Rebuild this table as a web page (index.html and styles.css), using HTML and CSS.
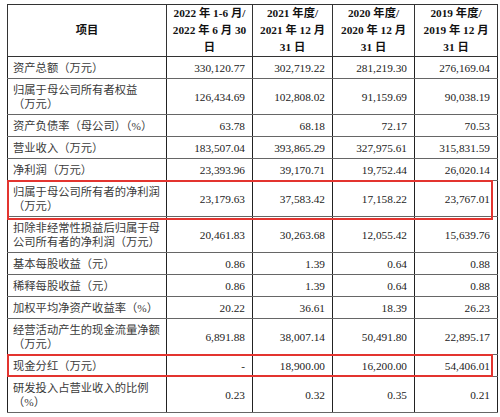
FILE: index.html
```html
<!DOCTYPE html>
<html>
<head>
    <title>主要财务数据</title>
    <link rel="stylesheet" href="styles.css">
</head>
<body>
    <div class="page">
        <table class="fin">
            <colgroup>
                <col class="c-item">
                <col class="c-y1">
                <col class="c-y2">
                <col class="c-y3">
                <col class="c-y4">
            </colgroup>
            <thead>
                <tr>
                    <th>项目</th>
                    <th>2022 年 1-6 月/<br>2022 年 6 月 30<br>日</th>
                    <th>2021 年度/<br>2021 年 12 月<br>31 日</th>
                    <th>2020 年度/<br>2020 年 12 月<br>31 日</th>
                    <th>2019 年度/<br>2019 年 12 月<br>31 日</th>
                </tr>
            </thead>
            <tbody>
                <tr>
                    <td class="label">资产总额（万元）</td>
                    <td>330,120.77</td><td>302,719.22</td><td>281,219.30</td><td>276,169.04</td>
                </tr>
                <tr>
                    <td class="label">归属于母公司所有者权益<br>（万元）</td>
                    <td>126,434.69</td><td>102,808.02</td><td>91,159.69</td><td>90,038.19</td>
                </tr>
                <tr>
                    <td class="label">资产负债率（母公司）（%）</td>
                    <td>63.78</td><td>68.18</td><td>72.17</td><td>70.53</td>
                </tr>
                <tr>
                    <td class="label">营业收入（万元）</td>
                    <td>183,507.04</td><td>393,865.29</td><td>327,975.61</td><td>315,831.59</td>
                </tr>
                <tr>
                    <td class="label">净利润（万元）</td>
                    <td>23,393.96</td><td>39,170.71</td><td>19,752.44</td><td>26,020.14</td>
                </tr>
                <tr>
                    <td class="label mark mark-tall">归属于母公司所有者的净利润<br>（万元）</td>
                    <td>23,179.63</td><td>37,583.42</td><td>17,158.22</td><td>23,767.01</td>
                </tr>
                <tr>
                    <td class="label">扣除非经常性损益后归属于母<br>公司所有者的净利润（万元）</td>
                    <td>20,461.83</td><td>30,263.68</td><td>12,055.42</td><td>15,639.76</td>
                </tr>
                <tr>
                    <td class="label">基本每股收益（元）</td>
                    <td>0.86</td><td>1.39</td><td>0.64</td><td>0.88</td>
                </tr>
                <tr>
                    <td class="label">稀释每股收益（元）</td>
                    <td>0.86</td><td>1.39</td><td>0.64</td><td>0.88</td>
                </tr>
                <tr>
                    <td class="label">加权平均净资产收益率（%）</td>
                    <td>20.22</td><td>36.61</td><td>18.39</td><td>26.23</td>
                </tr>
                <tr>
                    <td class="label">经营活动产生的现金流量净额<br>（万元）</td>
                    <td>6,891.88</td><td>38,007.14</td><td>50,491.80</td><td>22,895.17</td>
                </tr>
                <tr>
                    <td class="label mark mark-short">现金分红（万元）</td>
                    <td>-</td><td>18,900.00</td><td>16,200.00</td><td>54,406.01</td>
                </tr>
                <tr>
                    <td class="label">研发投入占营业收入的比例<br>（%）</td>
                    <td>0.23</td><td>0.32</td><td>0.35</td><td>0.21</td>
                </tr>
            </tbody>
        </table>
    </div>
</body>
</html>
```

FILE: styles.css
```css
body {
    margin: 0;
    background: #fff;
    font-family: "Liberation Serif", "Noto Sans CJK SC", serif;
    color: #222;
}
.page {
    padding: 4px 0 0 7px;
}
.fin {
    border-collapse: collapse;
    table-layout: fixed;
    width: 490px;
    font-size: 11.3px;
    border: 1px solid #222;
}
.c-item { width: 159px; }
.c-y1 { width: 86px; }
.c-y2 { width: 80px; }
.c-y3 { width: 82px; }
.c-y4 { width: 83px; }
.fin th {
    font-weight: bold;
    line-height: 17px;
    padding: 0;
    text-align: center;
    vertical-align: middle;
    border: 1px solid #333;
    color: #111;
}
.fin td {
    line-height: 14px;
    padding: 3.5px 7px 3.5px 4px;
    text-align: right;
    vertical-align: middle;
    border-left: 1px solid #222;
    border-right: 1px solid #222;
    border-top: 1px solid #666;
    border-bottom: 1px solid #666;
    white-space: nowrap;
}
.fin td.label {
    text-align: left;
    padding-left: 5px;
    color: #3a3a3a;
}
.mark {
    position: relative;
}
.mark::after {
    content: "";
    position: absolute;
    left: -1px;
    top: -1px;
    width: 486px;
    border: 2px solid #e3342f;
    box-sizing: border-box;
    pointer-events: none;
}
.mark-tall::after {
    height: 40px;
}
.mark-short::after {
    height: 23px;
}
```
